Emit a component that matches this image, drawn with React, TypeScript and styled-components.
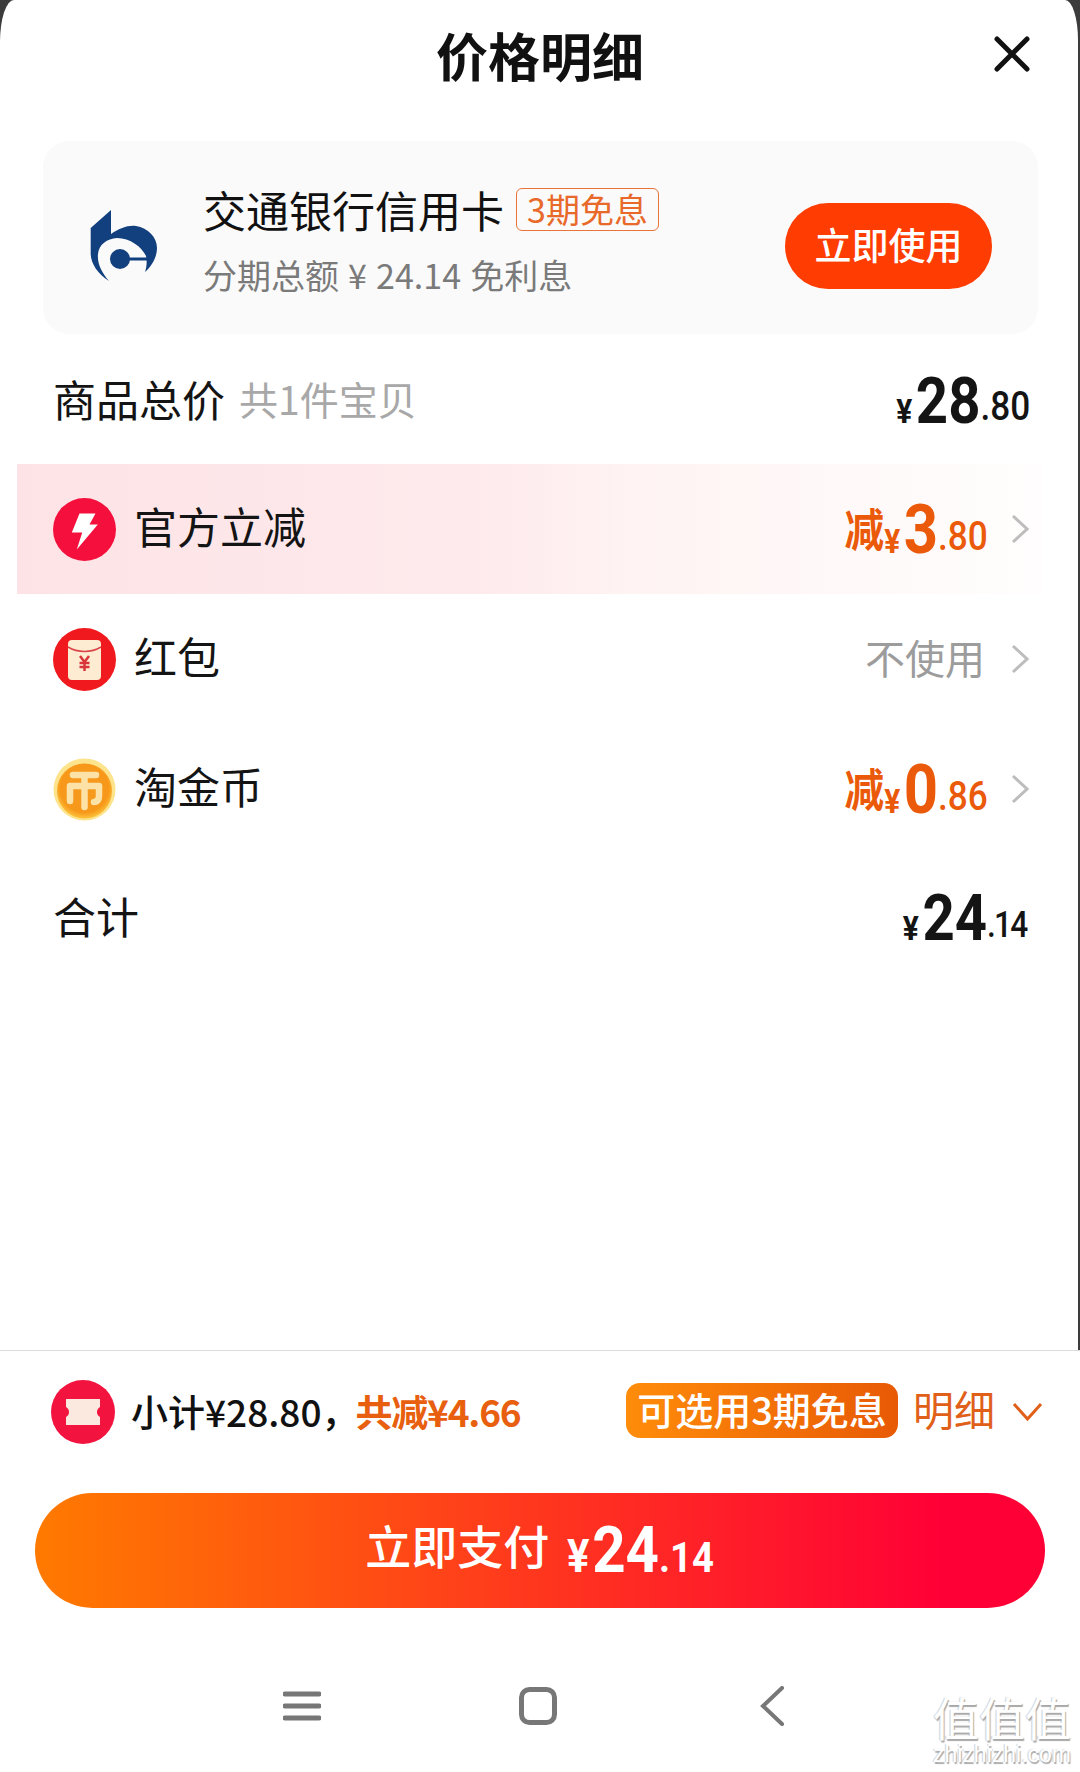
import styled, { createGlobalStyle } from 'styled-components';

const GlobalStyle = createGlobalStyle`
  html, body {
    margin: 0;
    padding: 0;
    background: #fff;
  }
  * {
    box-sizing: border-box;
  }
`;

const cjk = `"Noto Sans CJK SC", "Noto Sans", sans-serif`;
const digits = `Roboto, "Noto Sans CJK SC", sans-serif`;

function Price({ big, small, tone, label, size = 64 }: { big: string; small: string; tone: string; label?: string; size?: number }) {
  return (
    <PriceWrap $tone={tone}>
      {label && <PriceLabel>{label}</PriceLabel>}
      <Yen>¥</Yen>
      <Big $size={size}>{big}</Big>
      <Small>{small}</Small>
    </PriceWrap>
  );
}

function Chevron() {
  return (
    <ChevronSvg width="18" height="30" viewBox="0 0 18 30">
      <path d="M2 2l14 13L2 28" fill="none" stroke="#bdbdbd" strokeWidth="3" />
    </ChevronSvg>
  );
}

function BocomLogo() {
  return (
    <svg width="68" height="72" viewBox="0 0 68 72">
      <path
        d="M0.700 18 L21 0 V24 C30 18 38 15 46 16 C58 18 67 27 67 38 C67 47 62 56 55 62 C57 56 57 51 56 46 C52 37 40 28 27 28 C17 29 9 34 8 44 C7 54 12 63 19 71 C8 64 1 54 0.700 44 Z"
        fill="#123f7e"
      />
      <circle cx="30" cy="49" r="10" fill="#123f7e" />
      <rect x="38" y="47.500" width="19" height="3" fill="#123f7e" />
    </svg>
  );
}

function BoltIcon() {
  return (
    <svg width="63" height="63" viewBox="0 0 63 63">
      <circle cx="31.500" cy="31.500" r="31.500" fill="#f50f3c" />
      <path d="M26.500 15.500h16l-6 11h8.300L23.800 51.500l5.400-17H18.800z" fill="#fff" />
    </svg>
  );
}

function EnvelopeIcon() {
  return (
    <svg width="63" height="63" viewBox="0 0 63 63">
      <circle cx="31.500" cy="31.500" r="31.500" fill="#f01a1e" />
      <rect x="15" y="12" width="33" height="40" rx="4" fill="#fdecd2" />
      <path d="M15 19c10 6 23 6 33 0" fill="none" stroke="#d9444a" strokeWidth="1.500" />
      <path d="M27 28l4.500 6 4.500-6M31.500 34v9M26.500 35h10M26.500 39h10" fill="none" stroke="#d9343a" strokeWidth="2.500" />
    </svg>
  );
}

function CoinIcon() {
  return (
    <svg width="63" height="63" viewBox="0 0 63 63">
      <defs>
        <radialGradient id="coinFill" cx="50%" cy="45%" r="55%">
          <stop offset="0%" stopColor="#f59a1f" />
          <stop offset="80%" stopColor="#f7981a" />
          <stop offset="100%" stopColor="#fcc23c" />
        </radialGradient>
      </defs>
      <circle cx="31.500" cy="31.500" r="31" fill="#fde38c" />
      <circle cx="31.500" cy="33" r="27.500" fill="url(#coinFill)" />
      <path
        d="M20 17h23M31.500 19v8M17 43V28h29v10c0 4-2 6-5 6M31.500 27v22"
        fill="none"
        stroke="#fde2a8"
        strokeWidth="6.500"
        strokeLinecap="round"
        strokeLinejoin="round"
      />
    </svg>
  );
}

function TicketIcon() {
  return (
    <svg width="64" height="64" viewBox="0 0 64 64">
      <circle cx="32" cy="32" r="32" fill="#f2133f" />
      <path d="M15 19h34v8c-4 2-4 8 0 10v8H15v-8c4-2 4-8 0-10z" fill="#fbe9df" />
    </svg>
  );
}

export default function App() {
  return (
    <>
      <GlobalStyle />
      <Page>
        <SheetFrame>
          <Sheet>
            <Header>
              <Title>价格明细</Title>
              <Close>
                <svg width="36" height="36" viewBox="0 0 36 36">
                  <path d="M3 3l30 30M33 3L3 33" stroke="#111" strokeWidth="5" strokeLinecap="round" fill="none" />
                </svg>
              </Close>
            </Header>

            <CardRow>
              <LogoSlot>
                <BocomLogo />
              </LogoSlot>
              <CardText>
                <CardTitleLine>
                  <CardTitle>交通银行信用卡</CardTitle>
                  <CardBadge>3期免息</CardBadge>
                </CardTitleLine>
                <CardSub>分期总额 ¥ 24.14 免利息</CardSub>
              </CardText>
              <UseButton>立即使用</UseButton>
            </CardRow>

            <GoodsRow>
              <RowLeft>
                <RowName>商品总价</RowName>
                <RowHint>共1件宝贝</RowHint>
              </RowLeft>
              <Price big="28" small=".80" tone="#141414" />
            </GoodsRow>

            <DiscountRow $highlight>
              <RowLeft>
                <BoltIcon />
                <RowName>官方立减</RowName>
              </RowLeft>
              <RowRight>
                <Price big="3" small=".80" tone="#ea5a0a" label="减" size={68} />
                <Chevron />
              </RowRight>
            </DiscountRow>

            <DiscountRow>
              <RowLeft>
                <EnvelopeIcon />
                <RowName>红包</RowName>
              </RowLeft>
              <RowRight>
                <NotUsed>不使用</NotUsed>
                <Chevron />
              </RowRight>
            </DiscountRow>

            <DiscountRow>
              <RowLeft>
                <CoinIcon />
                <RowName>淘金币</RowName>
              </RowLeft>
              <RowRight>
                <Price big="0" small=".86" tone="#ea5a0a" label="减" size={68} />
                <Chevron />
              </RowRight>
            </DiscountRow>

            <TotalRow>
              <RowName>合计</RowName>
              <Price big="24" small=".14" tone="#141414" />
            </TotalRow>
          </Sheet>
        </SheetFrame>

        <Footer>
          <SummaryRow>
            <TicketIcon />
            <SummaryText>小计¥28.80，</SummaryText>
            <SummaryCut>共减¥4.66</SummaryCut>
            <Spacer />
            <FreeBadge>可选用3期免息</FreeBadge>
            <DetailLink>明细</DetailLink>
            <svg width="31" height="20" viewBox="0 0 31 20">
              <path d="M2 2l13.500 15L29 2" fill="none" stroke="#e0601a" strokeWidth="3" />
            </svg>
          </SummaryRow>

          <PayButton>
            <PayLabel>立即支付</PayLabel>
            <PayAmount>
              <PayYen>¥</PayYen>
              <PayBig>24</PayBig>
              <PaySmall>.14</PaySmall>
            </PayAmount>
          </PayButton>

          <NavBar>
            <svg width="38" height="32" viewBox="0 0 38 32">
              <path d="M2 4h34M2 16h34M2 28h34" stroke="#777" strokeWidth="5" strokeLinecap="round" />
            </svg>
            <svg width="38" height="38" viewBox="0 0 38 38">
              <rect x="2.500" y="2.500" width="33" height="33" rx="8" fill="none" stroke="#777" strokeWidth="5" />
            </svg>
            <svg width="30" height="40" viewBox="0 0 30 40">
              <path d="M27 2L8 20l19 18" fill="none" stroke="#777" strokeWidth="4" strokeLinecap="round" />
            </svg>
          </NavBar>

          <Watermark>
            <WatermarkMark>值值值</WatermarkMark>
            <WatermarkSite>zhizhizhi.com</WatermarkSite>
          </Watermark>
        </Footer>
      </Page>
    </>
  );
}

const Page = styled.div`
  position: relative;
  width: 1080px;
  height: 1772px;
  display: flex;
  flex-direction: column;
  background: #fff;
  overflow: hidden;
  font-family: ${cjk};
  color: #141414;
`;

const SheetFrame = styled.div`
  flex: 0 0 1350px;
  padding-right: 2px;
  background: #3c3c3c;
`;

const Sheet = styled.div`
  height: 100%;
  padding-top: 4px;
  border-radius: 14px 13px 0 0 / 42px 40px 0 0;
  background: #fff;
`;

const Header = styled.div`
  position: relative;
  height: 137px;
  padding: 12px 0 0 2px;
  display: flex;
  justify-content: center;
`;

const Title = styled.h1`
  margin: 0;
  font-size: 52px;
  line-height: 78px;
  font-weight: 700;
  color: #111;
`;

const Close = styled.div`
  position: absolute;
  top: 32px;
  right: 48px;
  line-height: 0;
`;

const CardRow = styled.div`
  height: 193px;
  margin: 0 40px 0 43px;
  padding: 16px 46px 0 47px;
  display: flex;
  align-items: center;
  background: #fafafa;
  border-radius: 26px;
`;

const LogoSlot = styled.div`
  flex: 0 0 113px;
  line-height: 0;
`;

const CardText = styled.div`
  flex: 1;
  padding-bottom: 7px;
`;

const CardTitleLine = styled.div`
  display: flex;
  align-items: center;
  gap: 12px;
  height: 44px;
  margin-bottom: 22px;
`;

const CardTitle = styled.span`
  font-size: 43px;
  line-height: 44px;
  color: #111;
`;

const CardBadge = styled.span`
  height: 43px;
  width: 143px;
  display: flex;
  align-items: center;
  justify-content: center;
  border: 1.5px solid #e8743a;
  border-radius: 6px;
  font-size: 34px;
  line-height: 40px;
  color: #e8692a;
`;

const CardSub = styled.div`
  font-size: 34px;
  line-height: 44px;
  word-spacing: 1.500px;
  color: #7a7a7a;
`;

const UseButton = styled.div`
  width: 207px;
  height: 86px;
  padding-bottom: 4px;
  display: flex;
  align-items: center;
  justify-content: center;
  background: #ff3d03;
  border-radius: 43px;
  font-size: 37px;
  font-weight: 500;
  color: #fff;
`;

const PriceWrap = styled.span<{ $tone: string }>`
  display: inline-flex;
  align-items: baseline;
  padding-top: 12px;
  color: ${(p) => p.$tone};
  font-family: ${digits};
  font-weight: 700;
  line-height: 60px;
  transform: scaleX(0.88);
  transform-origin: right center;
`;

const PriceLabel = styled.span`
  font-family: ${cjk};
  font-size: 45px;
  font-weight: 700;
  transform: translateY(-6px);
`;

const Yen = styled.span`
  font-size: 34px;
  margin-right: 4px;
`;

const Big = styled.span<{ $size: number }>`
  font-size: ${(p) => p.$size}px;
`;

const Small = styled.span`
  font-size: 40px;
  font-weight: 500;
  transform: translateY(-3px);
`;

const RowName = styled.span`
  padding-bottom: 8px;
  font-size: 43px;
  line-height: 50px;
  color: #141414;
`;

const RowHint = styled.span`
  padding-bottom: 2px;
  font-size: 39px;
  line-height: 50px;
  color: #a8a8a8;
`;

const RowLeft = styled.div`
  display: flex;
  align-items: center;
  gap: 18px;
`;

const GoodsRow = styled.div`
  height: 130px;
  padding: 0 48px 0 53px;
  display: flex;
  align-items: center;
  justify-content: space-between;

  ${RowLeft} {
    gap: 14px;
  }

  ${RowName} {
    padding-bottom: 2px;
  }

  ${PriceWrap} {
    padding-top: 14px;
  }
`;

const DiscountRow = styled.div<{ $highlight?: boolean }>`
  height: 130px;
  margin: 0 36px 0 17px;
  padding: 0 13px 0 36px;
  display: flex;
  align-items: center;
  justify-content: space-between;
  background: ${(p) => (p.$highlight ? 'linear-gradient(90deg, #fde3e6 0%, #feeaec 45%, #fff3f3 60%, #fffafa 85%, #fffdfd 100%)' : 'transparent')};
`;

const TotalRow = styled.div`
  height: 130px;
  padding: 0 51px 0 53px;
  display: flex;
  align-items: center;
  justify-content: space-between;

  ${PriceWrap} {
    padding-top: 8px;
  }

  ${Small} {
    font-size: 36px;
    letter-spacing: -2px;
  }
`;

const RowRight = styled.div`
  display: flex;
  align-items: center;
  gap: 23px;
`;

const NotUsed = styled.span`
  margin-right: 3px;
  padding-bottom: 5px;
  font-size: 40px;
  line-height: 50px;
  color: #9c9c9c;
`;

const ChevronSvg = styled.svg`
  display: block;
`;

const Footer = styled.div`
  flex: 1;
  border-top: 1px solid #dcdcdc;
  display: flex;
  flex-direction: column;
`;

const SummaryRow = styled.div`
  height: 122px;
  padding: 0 37px 0 51px;
  display: flex;
  align-items: center;
`;

const SummaryText = styled.span`
  margin-left: 16px;
  padding-bottom: 3px;
  font-size: 37px;
  font-weight: 500;
  color: #111;
`;

const SummaryCut = styled.span`
  margin-left: -3px;
  padding-bottom: 3px;
  font-size: 37px;
  font-weight: 700;
  letter-spacing: -1.200px;
  color: #e8600f;
`;

const Spacer = styled.div`
  flex: 1;
`;

const FreeBadge = styled.div`
  width: 272px;
  height: 55px;
  margin-bottom: 4px;
  padding-bottom: 3px;
  display: flex;
  align-items: center;
  justify-content: center;
  background: linear-gradient(90deg, #ff8c0a, #e85a05);
  border-radius: 14px;
  font-size: 38px;
  font-weight: 500;
  white-space: nowrap;
  color: #fff;
`;

const DetailLink = styled.span`
  margin: 0 17px 0 15px;
  padding-bottom: 8px;
  font-size: 41px;
  color: #e0601a;
`;

const PayButton = styled.div`
  height: 115px;
  margin: 20px 35px 0;
  padding-left: 14px;
  display: flex;
  align-items: center;
  justify-content: center;
  background: linear-gradient(90deg, #ff7a00 0%, #ff0036 90%);
  border-radius: 58px;
  color: #fff;
`;

const PayLabel = styled.span`
  margin-right: 18px;
  padding-bottom: 14px;
  font-size: 46px;
  font-weight: 500;
`;

const PayAmount = styled.span`
  flex: 0 0 147px;
  display: inline-flex;
  align-items: baseline;
  font-family: ${digits};
  font-weight: 700;
  white-space: nowrap;
  transform: scaleX(0.91);
  transform-origin: left center;
`;

const PayYen = styled.span`
  font-size: 46px;
  margin-right: 3px;
`;

const PayBig = styled.span`
  font-size: 64px;
`;

const PaySmall = styled.span`
  font-size: 42px;
`;

const NavBar = styled.div`
  margin-top: 78px;
  padding-left: 283px;
  display: flex;
  align-items: center;
  gap: 198px;
`;

const Watermark = styled.div`
  position: absolute;
  right: 8px;
  bottom: 5px;
  width: 140px;
  text-align: center;
  color: #fff;
  text-shadow: 1px 2px 1px #a8a8a8, -1px 0 1px #cfcfcf;
`;

const WatermarkMark = styled.div`
  font-size: 46px;
  line-height: 50px;
  white-space: nowrap;
`;

const WatermarkSite = styled.div`
  font-family: "Liberation Sans", sans-serif;
  font-size: 23px;
  line-height: 26px;
`;
